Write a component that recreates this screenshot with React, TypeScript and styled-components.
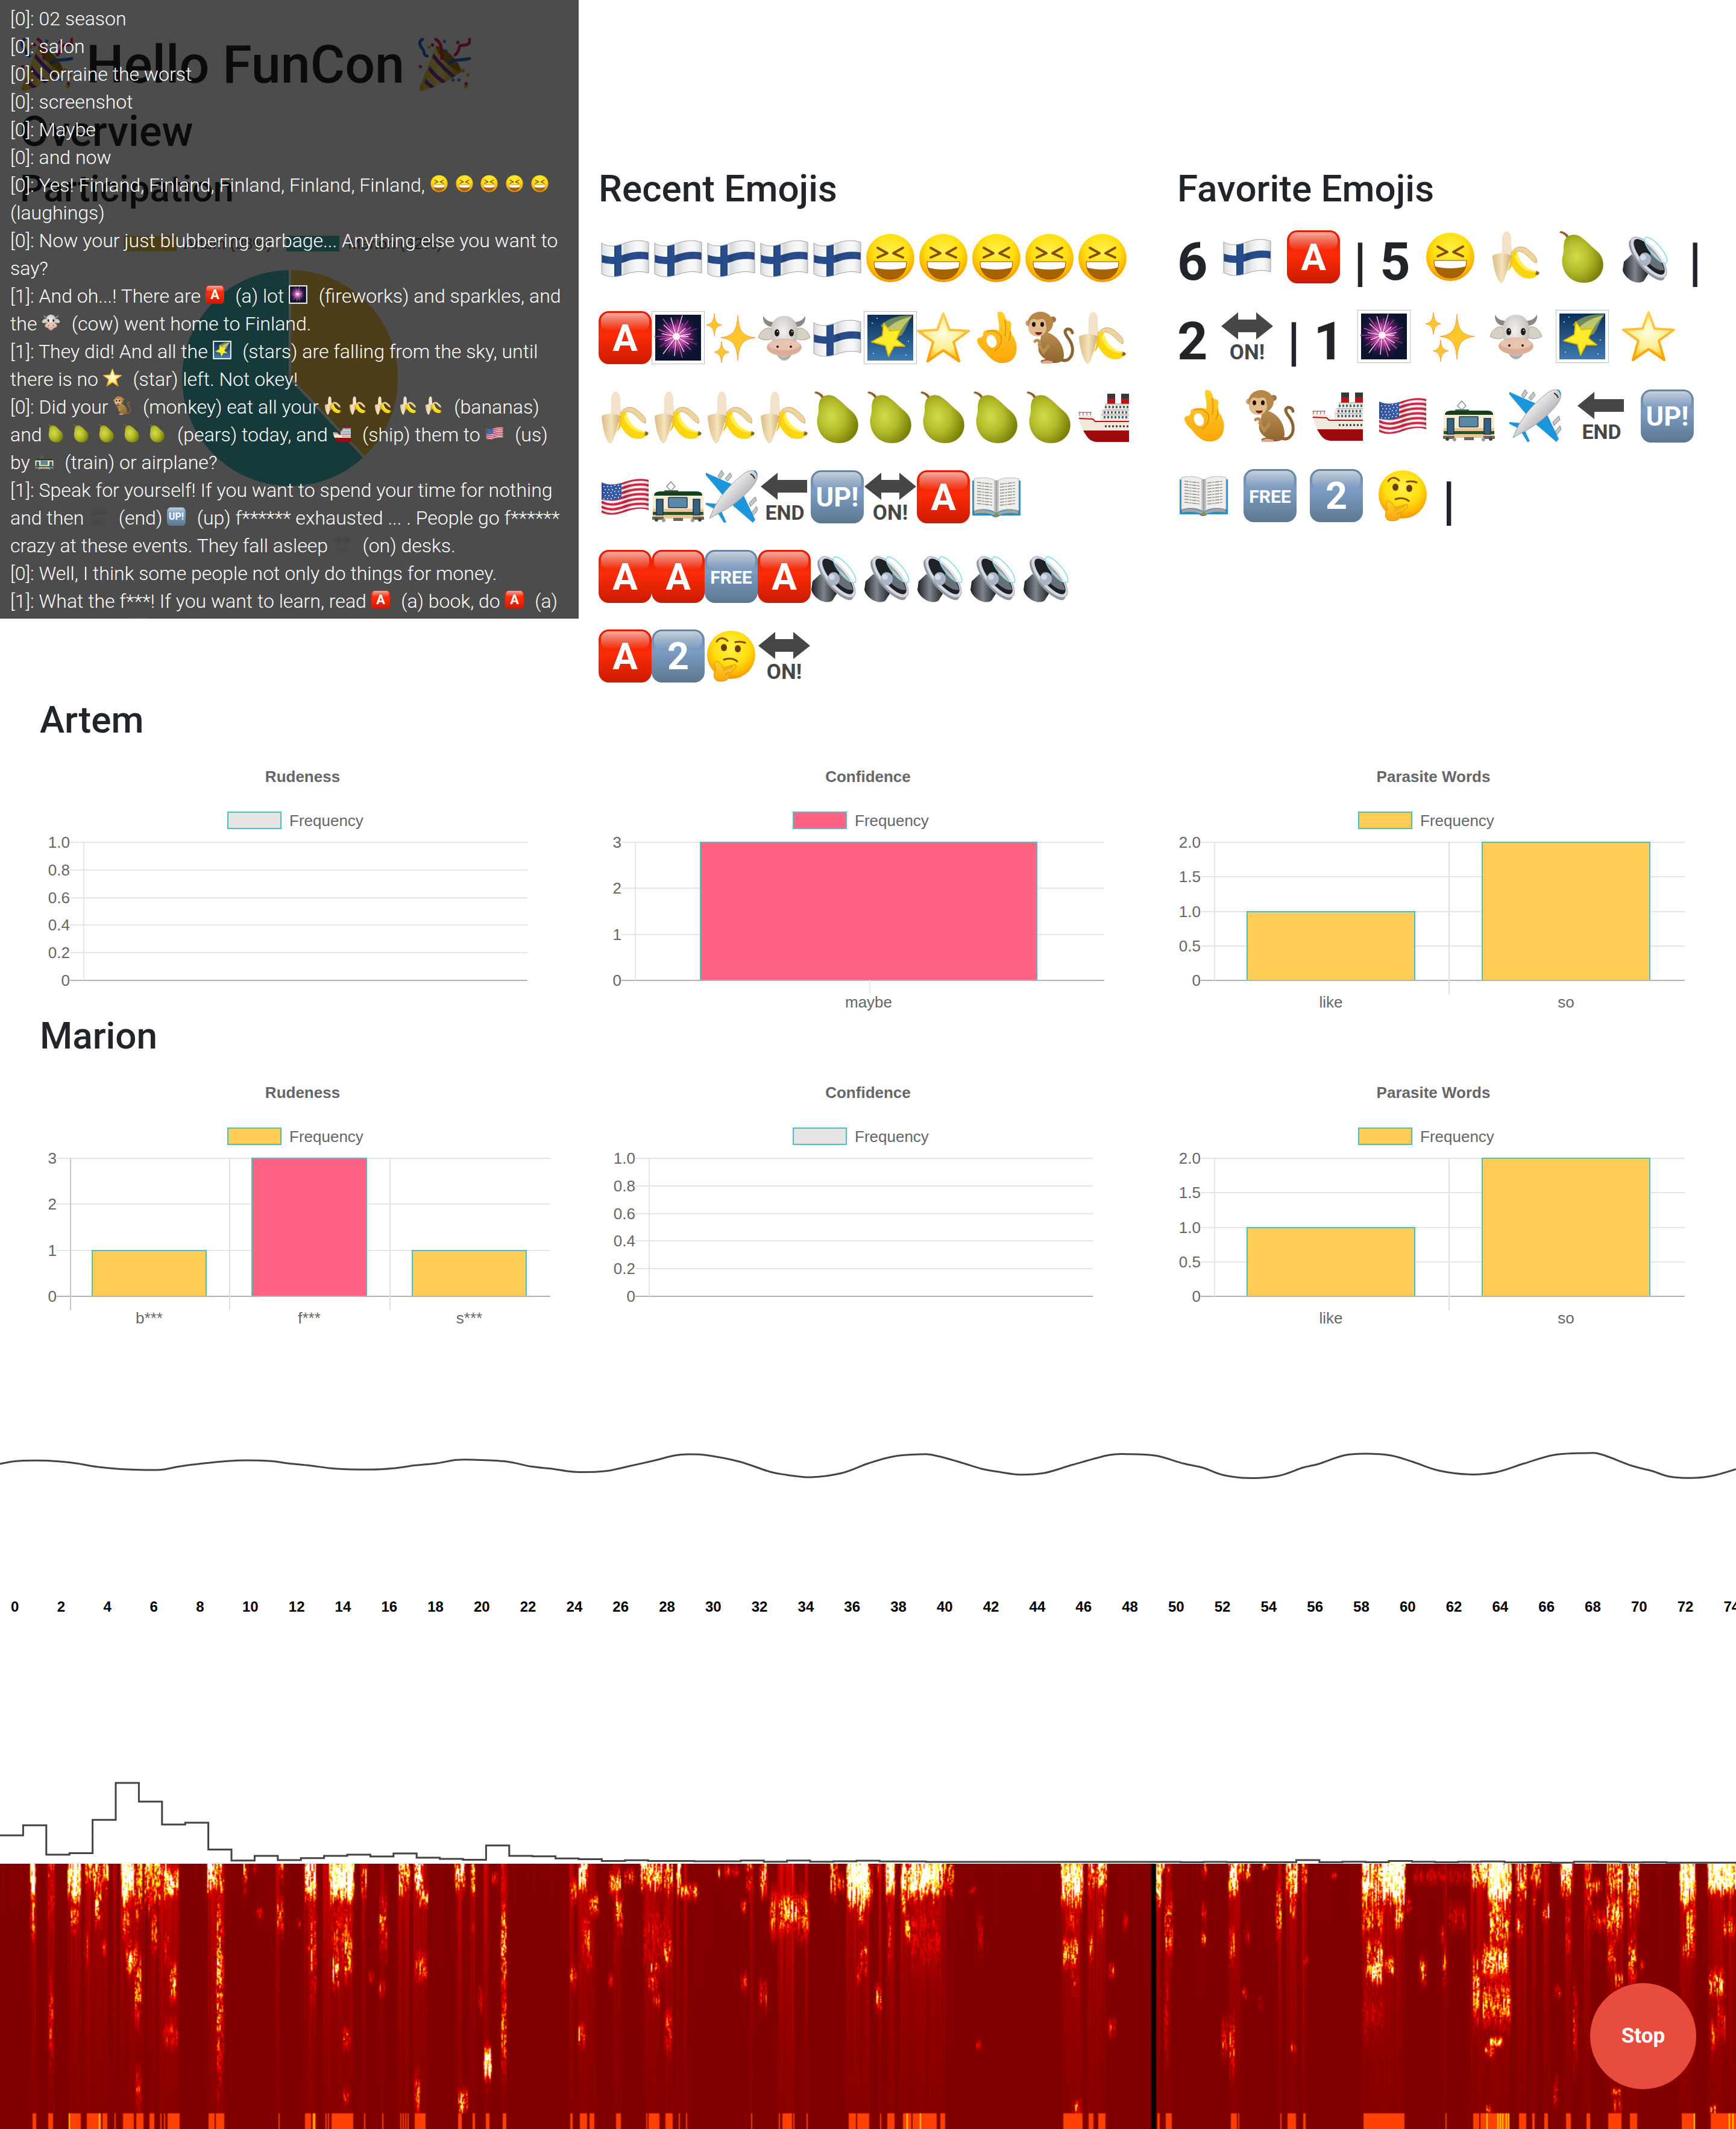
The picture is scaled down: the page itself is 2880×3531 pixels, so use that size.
import React, { useEffect, useRef } from "react";
import styled, { createGlobalStyle } from "styled-components";

const GlobalStyle = createGlobalStyle`
  *, *::before, *::after { box-sizing: border-box; }
  body {
    margin: 0;
    background: #fff;
    color: #212529;
    font-family: Roboto, "Liberation Sans", sans-serif;
  }
  h1, h2, h3, p { margin: 0; }
`;

/* ---------- layout ---------- */

const Page = styled.div`
  position: relative;
  overflow: hidden;
`;

const Header = styled.header`
  padding: 54px 33px 0;
`;

const PageTitle = styled.h1`
  display: flex;
  align-items: center;
  gap: 22px;
  font-size: 88px;
  line-height: 106px;
  font-weight: 500;
  margin-bottom: 16px;
`;

const SectionTitle = styled.h2`
  font-size: 70px;
  line-height: 84px;
  font-weight: 500;
  margin-bottom: 16px;
`;

const BlockTitle = styled.h3<{ $inset?: boolean }>`
  font-size: 62px;
  line-height: 74px;
  font-weight: 500;
  padding-left: ${(p) => (p.$inset ? 33 : 0)}px;
  margin-bottom: 18px;
`;

const Columns = styled.div`
  display: grid;
  grid-template-columns: repeat(3, minmax(0, 1fr));
`;

const Column = styled.section`
  padding: 0 33px;
`;

const People = styled.main`
  padding: 3px 33px 0;
`;

const Person = styled.section`
  & + & { margin-top: -4px; }
`;

/* ---------- emojis ---------- */

const Glyph = styled.svg<{ $size: number; $drop: number; $gap: number }>`
  width: ${(p) => p.$size}px;
  height: ${(p) => p.$size}px;
  margin: 0 ${(p) => p.$gap}px 0 0;
  vertical-align: -${(p) => p.$drop}px;
  flex: none;
`;

const EmojiRow = styled.div`
  display: flex;
  align-items: center;
  height: 132px;
  &:first-of-type { margin-top: -6px; }
`;

const Favorites = styled.p`
  font-size: 88px;
  line-height: 132px;
  font-weight: 700;
  svg { vertical-align: -6px; }
`;

const HiddenDefs = styled.svg`
  position: absolute;
  width: 0;
  height: 0;
`;

function Emoji({ name, size = 88, drop = 0, gap = 0 }: { name: string; size?: number; drop?: number; gap?: number }) {
  return (
    <Glyph $size={size} $drop={drop} $gap={gap} viewBox="0 0 88 88" role="img" aria-label={name}>
      <use href={`#e-${name}`} />
    </Glyph>
  );
}

const FLAG = "M5 19 C17 27 30 24 44 19 S72 14 83 18 V69 C72 65 58 66 44 71 S17 77 5 70 Z";
const US_FLAG = "M5 20 C17 26 30 24 44 19 S72 13 83 16 V66 C72 62 58 64 44 69 S17 76 5 70 Z";

const burst = Array.from({ length: 34 }, (_, i) => {
  const a = (i / 34) * Math.PI * 2;
  const r = 20 + ((i * 7) % 5) * 4;
  return { x: 41 + Math.cos(a) * r, y: 42 + Math.sin(a) * r, c: i % 3 === 0 ? "#ffe3f4" : i % 3 === 1 ? "#e35bb5" : "#a33a9c" };
});

function Tile({ id, fill, label, size, y }: { id: string; fill: string; label: string; size: number; y: number }) {
  return (
    <symbol id={id} viewBox="0 0 88 88">
      <rect width="88" height="88" rx="17" fill={fill} />
      <rect x="4" y="3" width="80" height="30" rx="13" fill="url(#g-gloss)" />
      <text x="44" y={y} fontSize={size} fontWeight="700" fontFamily="Roboto, sans-serif" textAnchor="middle" fill="#fff">
        {label}
      </text>
    </symbol>
  );
}

function EmojiDefs() {
  return (
    <HiddenDefs aria-hidden="true">
      <defs>
        <radialGradient id="g-face" cx=".5" cy=".35" r=".65">
          <stop offset="0" stopColor="#fff04a" />
          <stop offset=".55" stopColor="#ffdf10" />
          <stop offset=".85" stopColor="#ffb300" />
          <stop offset="1" stopColor="#f29400" />
        </radialGradient>
        <linearGradient id="g-red" x2="0" y2="1">
          <stop offset="0" stopColor="#e01c00" />
          <stop offset=".45" stopColor="#fb2c06" />
          <stop offset="1" stopColor="#cb1a00" />
        </linearGradient>
        <linearGradient id="g-blue" x2="0" y2="1">
          <stop offset="0" stopColor="#66829f" />
          <stop offset=".4" stopColor="#7b9cc4" />
          <stop offset="1" stopColor="#5d7790" />
        </linearGradient>
        <linearGradient id="g-gloss" x2="0" y2="1">
          <stop offset="0" stopColor="#fff" stopOpacity=".62" />
          <stop offset="1" stopColor="#fff" stopOpacity="0" />
        </linearGradient>
        <linearGradient id="g-cloth">
          <stop offset="0" stopColor="#000" stopOpacity=".12" />
          <stop offset=".3" stopColor="#fff" stopOpacity="0" />
          <stop offset=".5" stopColor="#000" stopOpacity=".13" />
          <stop offset=".8" stopColor="#fff" stopOpacity="0" />
          <stop offset="1" stopColor="#000" stopOpacity=".16" />
        </linearGradient>
        <radialGradient id="g-burst">
          <stop offset="0" stopColor="#fff" />
          <stop offset=".18" stopColor="#ff8fd0" />
          <stop offset=".5" stopColor="#8a2785" stopOpacity=".8" />
          <stop offset="1" stopColor="#0d1330" stopOpacity="0" />
        </radialGradient>
        <linearGradient id="g-night" x2="0" y2="1">
          <stop offset="0" stopColor="#0c2f5a" />
          <stop offset="1" stopColor="#3e7ab0" />
        </linearGradient>
        <radialGradient id="g-star" cx=".5" cy=".4" r=".6">
          <stop offset="0" stopColor="#fffde0" />
          <stop offset=".6" stopColor="#ffee90" />
          <stop offset="1" stopColor="#ffbe14" />
        </radialGradient>
        <linearGradient id="g-starEdge" x2="0" y2="1">
          <stop offset="0" stopColor="#ffd257" />
          <stop offset="1" stopColor="#ff9e00" />
        </linearGradient>
        <linearGradient id="g-hand" x2="0" y2="1">
          <stop offset="0" stopColor="#ffd02b" />
          <stop offset="1" stopColor="#fba60a" />
        </linearGradient>
        <radialGradient id="g-pear" cx=".35" cy=".45" r=".65">
          <stop offset="0" stopColor="#d3dc4c" />
          <stop offset=".5" stopColor="#b3bb2b" />
          <stop offset="1" stopColor="#7b8007" />
        </radialGradient>
        <linearGradient id="g-peel">
          <stop offset="0" stopColor="#d9bd88" />
          <stop offset=".5" stopColor="#f4e3bd" />
          <stop offset="1" stopColor="#ceaa6d" />
        </linearGradient>
        <linearGradient id="g-fur" x2="0" y2="1">
          <stop offset="0" stopColor="#ba8d50" />
          <stop offset="1" stopColor="#8d6430" />
        </linearGradient>
        <linearGradient id="g-metal">
          <stop offset="0" stopColor="#1c1f22" />
          <stop offset=".45" stopColor="#7d858c" />
          <stop offset="1" stopColor="#16181a" />
        </linearGradient>
        <linearGradient id="g-plane" x1="0" y1="0" x2="1" y2="1">
          <stop offset=".3" stopColor="#f7f7f7" />
          <stop offset=".75" stopColor="#a2a4a8" />
        </linearGradient>
        <linearGradient id="g-gold">
          <stop offset="0" stopColor="#e6be20" />
          <stop offset=".5" stopColor="#fff07d" />
          <stop offset="1" stopColor="#c89a08" />
        </linearGradient>
        <radialGradient id="g-cow" cx=".45" cy=".35" r=".65">
          <stop offset="0" stopColor="#f4f1ed" />
          <stop offset="1" stopColor="#b9b4ae" />
        </radialGradient>
        <clipPath id="c-flag"><path d={FLAG} /></clipPath>
        <clipPath id="c-us"><path d={US_FLAG} /></clipPath>
        <clipPath id="c-cone"><path d="M30 13 C50 18 70 40 72 56 C52 72 28 82 7 88 Z" /></clipPath>
      </defs>

      <symbol id="e-finland" viewBox="0 0 88 88">
        <path d={FLAG} fill="#f6f7f9" />
        <g clipPath="url(#c-flag)" fill="none" stroke="#24498a">
          <path d="M32 10V80" strokeWidth="12" />
          <path d="M0 43 C17 50 30 49 44 44 S72 38 88 42" strokeWidth="12" />
        </g>
        <path d={FLAG} fill="url(#g-cloth)" stroke="#9aa0a6" strokeWidth="1" />
      </symbol>

      <symbol id="e-us" viewBox="0 0 88 88">
        <path d={US_FLAG} fill="#f6f4f4" />
        <g clipPath="url(#c-us)">
          <g fill="none" stroke="#cf2440" strokeWidth="4">
            {[0, 1, 2, 3, 4, 5, 6].map((i) => (
              <path key={i} d={`M0 ${18 + i * 8} C17 ${28 + i * 8} 30 ${25 + i * 8} 44 ${20 + i * 8} S72 ${14 + i * 8} 88 ${18 + i * 8}`} />
            ))}
          </g>
          <path d="M0 16 C17 26 28 23 38 19 V46 C25 51 12 51 0 47 Z" fill="#3158a6" />
          <g fill="#fff">
            {[0, 1, 2, 3, 4].map((r) =>
              [0, 1, 2, 3, 4].map((c) => <circle key={`${r}${c}`} cx={9 + c * 6 + (r % 2) * 2} cy={27 + r * 5 - (c > 2 ? 2 : 0)} r="1" />),
            )}
          </g>
        </g>
        <path d={US_FLAG} fill="url(#g-cloth)" />
      </symbol>

      <symbol id="e-laugh" viewBox="0 0 88 88">
        <circle cx="44" cy="44" r="40" fill="url(#g-face)" />
        <path d="M23 27 L39 36 L23 43 M65 27 L49 36 L65 43" fill="none" stroke="#8a4b00" strokeWidth="4" strokeLinecap="round" strokeLinejoin="round" />
        <path d="M17 50 H71 C71 68 60 79 44 79 S17 68 17 50Z" fill="#a66300" />
        <path d="M17 50 H71 C71 54 71 57 69 60 C52 64 36 64 19 60 C17 57 17 54 17 50Z" fill="#fff" />
        <path d="M17 50 H71 C71 68 60 79 44 79 S17 68 17 50Z" fill="none" stroke="#8a4b00" strokeWidth="1" />
      </symbol>

      <symbol id="e-thinking" viewBox="0 0 88 88">
        <circle cx="44" cy="42" r="40" fill="url(#g-face)" />
        <ellipse cx="32" cy="30" rx="5" ry="6" fill="#6d3a00" />
        <ellipse cx="55" cy="32" rx="5" ry="6" fill="#6d3a00" />
        <path d="M20 20 C24 13 32 13 38 19 M51 21 C56 20 62 20 67 22" fill="none" stroke="#8a4b00" strokeWidth="3" strokeLinecap="round" />
        <path d="M32 50 C40 47 49 48 54 53" fill="none" stroke="#8a4b00" strokeWidth="3" strokeLinecap="round" />
        <path d="M18 53 C14 56 18 62 19 66 C13 74 14 86 26 86 C38 86 42 80 41 74 L51 64 C55 60 51 57 47 59 L31 64 C29 60 25 52 18 53Z" fill="url(#g-hand)" stroke="#e28a00" strokeWidth="1" />
        <path d="M30 68 L47 61 M34 75 L41 71" fill="none" stroke="#d98300" strokeWidth="1" />
      </symbol>

      <Tile id="e-a" fill="url(#g-red)" label="A" size={62} y={66} />
      <Tile id="e-up" fill="url(#g-blue)" label="UP!" size={45} y={60} />
      <Tile id="e-free" fill="url(#g-blue)" label="FREE" size={30} y={56} />
      <Tile id="e-two" fill="url(#g-blue)" label="2" size={63} y={66} />

      <symbol id="e-end" viewBox="0 0 88 88">
        <path d="M5 27 L33 4 V16 H82 V37 H33 V49 Z" fill="#464646" />
        <text x="45" y="82" fontSize="34" fontWeight="700" fontFamily="Roboto, sans-serif" textAnchor="middle" fill="#464646">END</text>
      </symbol>

      <symbol id="e-on" viewBox="0 0 88 88">
        <path d="M1 27 L29 4 V16 H59 V4 L87 27 L59 49 V37 H29 V49 Z" fill="#464646" />
        <text x="44" y="82" fontSize="35" fontWeight="700" fontFamily="Roboto, sans-serif" textAnchor="middle" fill="#464646">ON!</text>
      </symbol>

      <symbol id="e-fireworks" viewBox="0 0 88 88">
        <rect x=".5" y=".5" width="87" height="87" fill="#fff" stroke="#b8c4c8" />
        <rect x="6" y="6" width="76" height="76" fill="#0d1430" />
        <circle cx="42" cy="42" r="38" fill="url(#g-burst)" />
        {burst.map((b, i) => (
          <path key={i} d={`M41 42L${b.x.toFixed(1)} ${b.y.toFixed(1)}`} stroke={b.c} strokeWidth="1.3" strokeLinecap="round" />
        ))}
        <circle cx="41" cy="42" r="6" fill="#fff" opacity=".9" />
      </symbol>

      <symbol id="e-stars" viewBox="0 0 88 88">
        <rect x=".5" y=".5" width="87" height="87" fill="#fff" stroke="#b8c4c8" />
        <rect x="6" y="6" width="76" height="76" fill="url(#g-night)" />
        <path d="M28 24 C42 10 60 7 81 7 C74 16 70 30 63 40 L46 46Z" fill="#b6ca53" opacity=".55" />
        <path d="M38 30 C50 18 64 12 80 9 C70 18 64 28 58 38Z" fill="#f5ef76" opacity=".6" />
        <path d="M33 20 L43 33 L61 31 L54 47 L68 58 L50 58 L41 75 L36 57 L13 51 L31 41 Z" fill="#ffec2b" stroke="#e2be00" strokeWidth="2" strokeLinejoin="round" />
        <g fill="#cfe2f2">
          <circle cx="14" cy="20" r="1" /><circle cx="22" cy="12" r="1" /><circle cx="74" cy="50" r="1" /><circle cx="70" cy="73" r="1" /><circle cx="16" cy="70" r="1" />
        </g>
      </symbol>

      <symbol id="e-star" viewBox="0 0 88 88">
        <path d="M44 4 L54 31 L86 33 L61 51 L70 83 L44 65 L18 83 L27 51 L2 33 L34 31 Z" fill="url(#g-star)" stroke="url(#g-starEdge)" strokeWidth="4" strokeLinejoin="round" />
      </symbol>

      <symbol id="e-sparkles" viewBox="0 0 88 88">
        <g fill="#ffc52b" stroke="#f5a13d" strokeWidth="1" strokeLinejoin="round">
          <path d="M55 7 C57 33 62 41 84 44 C62 47 57 56 55 82 C53 56 48 47 27 44 C48 41 53 33 55 7Z" />
          <path d="M16 4 C17 17 20 21 28 23 C20 25 17 29 16 41 C15 29 12 25 3 23 C12 21 15 17 16 4Z" />
          <path d="M28 50 C29 62 32 66 41 68 C32 70 29 74 28 86 C27 74 24 70 16 68 C24 66 27 62 28 50Z" />
        </g>
      </symbol>

      <symbol id="e-cow" viewBox="0 0 88 88">
        <path d="M9 8 C8 22 18 28 30 26 L32 17 C22 20 14 16 9 8Z M79 8 C80 22 70 28 58 26 L56 17 C66 20 74 16 79 8Z" fill="#8c8782" />
        <path d="M1 44 C4 34 11 27 21 28 L26 44 C18 50 8 48 1 44Z M87 44 C84 34 77 27 67 28 L62 44 C70 50 80 48 87 44Z" fill="#d6d1c4" stroke="#a59d86" strokeWidth="1" />
        <path d="M44 8 C58 8 66 18 66 34 C66 52 58 82 44 82 S22 52 22 34 C22 18 30 8 44 8Z" fill="url(#g-cow)" />
        <ellipse cx="44" cy="60" rx="29" ry="14" fill="#dcae98" />
        <ellipse cx="44" cy="56" rx="26" ry="9" fill="#e8c3b0" />
        <ellipse cx="32" cy="36" rx="4" ry="6" fill="#1d1a18" />
        <ellipse cx="56" cy="36" rx="4" ry="6" fill="#1d1a18" />
        <circle cx="33" cy="34" r="1" fill="#fff" /><circle cx="57" cy="34" r="1" fill="#fff" />
        <circle cx="33" cy="59" r="2" fill="#2a1712" /><circle cx="55" cy="59" r="2" fill="#2a1712" />
        <path d="M35 75 C40 80 48 80 53 75" fill="none" stroke="#9b948c" strokeWidth="1" />
      </symbol>

      <symbol id="e-ok" viewBox="0 0 88 88">
        <path d="M47 4 C52 -1 58 3 58 10 L64 32 C72 26 69 12 60 17 L68 36 L77 54 C80 72 72 86 54 86 C42 86 37 80 30 74 L17 58 C10 52 11 44 17 44 C24 42 22 36 30 32 C38 29 48 31 48 33 C50 24 46 12 47 4Z" fill="url(#g-hand)" />
        <path d="M46 2 C52 -2 58 4 60 14 C66 18 68 26 69 38 C76 46 78 56 76 66 C72 82 60 88 50 86 C40 84 36 78 30 72 C22 64 12 58 13 48 C15 42 22 46 26 50 C22 42 20 38 24 33 C30 30 44 30 50 36 C54 26 44 12 46 2Z" fill="url(#g-hand)" />
        <ellipse cx="36" cy="50" rx="8" ry="11" fill="#fff" transform="rotate(-20 36 50)" />
        <path d="M28 34 C38 30 46 34 52 42 C54 52 48 62 40 66 M58 14 C60 24 60 34 58 42 M67 34 C68 42 66 46 64 50" fill="none" stroke="#e08c00" strokeWidth="1.5" />
      </symbol>

      <symbol id="e-monkey" viewBox="0 0 88 88">
        <path d="M62 80 C74 86 84 76 82 60 C80 46 70 42 70 34 C71 28 80 28 82 36" fill="none" stroke="#8d6430" strokeWidth="5" strokeLinecap="round" />
        <path d="M34 34 C52 36 68 52 68 74 C68 84 60 86 52 86 H34 C26 84 30 80 38 80 C28 74 22 64 28 54 C30 46 28 42 34 34Z" fill="url(#g-fur)" />
        <path d="M20 50 C24 46 30 50 27 56 L34 68 L42 58" fill="none" stroke="#b98c52" strokeWidth="5" strokeLinecap="round" />
        <path d="M30 85 C36 80 44 82 50 84 L48 87 H30Z" fill="#dfa98c" />
        <circle cx="9" cy="20" r="5" fill="#d79f86" /><circle cx="50" cy="14" r="5" fill="#a27542" />
        <ellipse cx="29" cy="20" rx="21" ry="19" fill="#b58849" />
        <ellipse cx="24" cy="28" rx="15" ry="14" fill="#e1bc8a" />
        <circle cx="18" cy="20" r="7" fill="#e1bc8a" /><circle cx="31" cy="20" r="7" fill="#e1bc8a" />
        <ellipse cx="18" cy="22" rx="3" ry="4" fill="#1c120a" /><ellipse cx="32" cy="22" rx="3" ry="4" fill="#1c120a" />
        <path d="M20 35 H32 C30 41 22 41 20 35Z" fill="#7d1f1c" />
      </symbol>

      <symbol id="e-banana" viewBox="0 0 88 88">
        <path d="M20 40 C22 26 18 8 26 2 C34 -1 37 10 36 20 L38 44 Z" fill="#f3e2ca" />
        <path d="M36 38 C42 26 56 24 66 34 C74 40 80 46 78 54 C68 52 62 36 48 34 C44 38 42 44 38 48Z" fill="#ecd49a" stroke="#cba765" strokeWidth="1" />
        <path d="M32 44 L44 32 C48 52 58 66 80 68 C84 72 76 80 66 80 C48 80 40 64 32 50Z" fill="#fbd510" />
        <path d="M46 36 C50 54 62 66 80 68 C70 72 50 66 42 44Z" fill="#fff04c" />
        <path d="M78 67 L83 70 L81 74 L76 74Z" fill="#8a6a22" />
        <path d="M5 42 C14 36 28 38 37 42 C32 52 32 64 26 76 C24 84 22 88 18 87 C10 78 6 58 5 42Z" fill="url(#g-peel)" />
        <path d="M37 42 C34 54 32 64 30 68 C38 62 40 52 38 42Z" fill="#f0c81c" />
      </symbol>

      <symbol id="e-pear" viewBox="0 0 88 88">
        <path d="M19 14 C16 8 12 5 6 4 L8 1 C17 3 22 8 23 14Z" fill="#94602a" />
        <path d="M14 20 C16 8 30 4 40 10 C52 18 58 26 68 34 C82 46 82 66 70 78 C58 90 36 90 22 78 C12 68 8 54 12 40 C14 32 12 28 14 20Z" fill="url(#g-pear)" />
      </symbol>

      <symbol id="e-ship" viewBox="0 0 88 88">
        <path d="M52 6 H65 V22 H52Z M75 6 H88 V22 H75Z" fill="#b5151a" />
        <path d="M52 5 H65 V13 H52Z M75 5 H88 V13 H75Z" fill="#34373b" />
        <path d="M48 22 H88 V50 H40 L42 32 H48Z" fill="#eee9dd" />
        <path d="M48 22 H88 M44 32 H88 M42 40 H88" stroke="#9a968b" strokeWidth="1" />
        <path d="M48 27 H88 M46 36 H88 M46 44 H88" stroke="#2f6aa5" strokeWidth="4" strokeDasharray="3 3" />
        <path d="M4 40 L26 42 L32 50 H88 V66 H12 C8 58 5 50 4 40Z" fill="#efe9dc" />
        <path d="M5 46 L28 47 L32 51 H88" fill="none" stroke="#b5151a" strokeWidth="2" />
        <path d="M48 59 H88" stroke="#333" strokeWidth="3" strokeDasharray="3 3" />
        <path d="M12 66 H88 V85 H34 C22 84 18 76 12 66Z" fill="#9d0a0c" />
        <path d="M4 36 H26 M6 36 V41 M12 36 V41 M18 36 V41 M24 36 V41" stroke="#8b3b35" strokeWidth="1" />
      </symbol>

      <symbol id="e-train" viewBox="0 0 88 88">
        <path d="M32 19 L39 27 L32 34 L25 27Z" fill="none" stroke="#8a8f93" strokeWidth="1.5" />
        <path d="M21 34 H44" stroke="#55605a" strokeWidth="2" />
        <path d="M4 42 C4 36 10 35 16 35 H72 C80 35 84 36 84 42Z" fill="#12401c" />
        <rect x="2" y="42" width="84" height="38" rx="2" fill="#e9c896" />
        <rect x="2" y="42" width="84" height="22" fill="#f6ecd4" />
        <rect x="2" y="69" width="84" height="5" fill="#1e5a28" />
        <rect x="28" y="45" width="31" height="17" rx="1" fill="#5b88a6" stroke="#2a3a44" strokeWidth="1.5" />
        <rect x="8" y="48" width="11" height="26" fill="#35607f" stroke="#1c3344" strokeWidth="1.5" />
        <rect x="69" y="48" width="11" height="26" fill="#35607f" stroke="#1c3344" strokeWidth="1.5" />
        <path d="M1 77 H20 V82 H1Z M68 77 H87 V82 H68Z M36 79 H52 V84 H36Z" fill="#6b655c" />
        <circle cx="8" cy="82" r="3" fill="#444" /><circle cx="20" cy="83" r="3" fill="#999" /><circle cx="68" cy="83" r="3" fill="#999" /><circle cx="80" cy="82" r="3" fill="#444" />
      </symbol>

      <symbol id="e-airplane" viewBox="0 0 88 88">
        <g fill="#c2c5ca" stroke="#7f8388" strokeWidth="1">
          <path d="M22 10 L28 0 L32 6 L26 14Z M34 14 L42 4 L45 10 L38 18Z M74 54 L84 44 L86 50 L76 60Z M78 70 L86 60 L88 66 L80 76Z" />
        </g>
        <path d="M2 4 L52 26 L34 46 L2 8Z" fill="#1b95dc" />
        <path d="M62 36 L84 82 L80 87 L44 56Z" fill="#1b95dc" />
        <path d="M2 54 L24 56 L20 66 L2 57Z M26 64 L36 86 L32 87 L20 68Z" fill="#1b95dc" />
        <path d="M84 1 C90 6 88 16 80 26 C68 42 44 62 22 72 L8 80 L14 66 C24 44 44 22 62 8 C70 1 78 -1 84 1Z" fill="url(#g-plane)" stroke="#989ba0" strokeWidth="1" />
        <path d="M76 6 C80 8 82 10 83 14" fill="none" stroke="#333" strokeWidth="2" />
        <path d="M80 0 C86 0 88 4 87 10 C86 6 84 3 80 0Z" fill="#1b95dc" />
      </symbol>

      <symbol id="e-book" viewBox="0 0 88 88">
        <path d="M4 17 H84 V75 H50 C46 79 40 79 36 75 H4Z" fill="#2f8cc0" />
        <path d="M8 68 C20 64 34 66 44 72 C54 66 68 64 80 68 V72 C68 70 56 70 44 76 C32 70 20 70 8 72Z" fill="#a5a5a5" />
        <path d="M7 14 C20 11 36 12 43 18 V70 C34 64 20 63 7 67Z M81 14 C68 11 52 12 45 18 V70 C54 64 68 63 81 67Z" fill="#efeeec" stroke="#bab8b4" strokeWidth="1" />
        <path d="M40 16 L44 19 L48 16 V68 L44 71 L40 68Z" fill="#a9a7a3" opacity=".6" />
        <g stroke="#8d8b87" strokeWidth="1.4" strokeDasharray="7 1 4 1">
          {[0, 1, 2, 3, 4, 5, 6, 7].map((i) => (
            <path key={i} d={`M12 ${20 + i * 5} L38 ${23 + i * 5} M50 ${23 + i * 5} L76 ${20 + i * 5}`} />
          ))}
        </g>
        <circle cx="44" cy="74" r="3" fill="#a98a1c" />
      </symbol>

      <symbol id="e-speaker" viewBox="0 0 88 88">
        <path d="M3 52 L16 40 L46 68 L36 84 C24 92 4 80 1 66Z" fill="url(#g-metal)" />
        <ellipse cx="41" cy="49" rx="15" ry="43" transform="rotate(-40 41 49)" fill="#8f979f" />
        <ellipse cx="44" cy="45" rx="17" ry="42" transform="rotate(-40 44 45)" fill="#d3d9e2" stroke="#99a1ab" strokeWidth="1" />
        <ellipse cx="45" cy="44" rx="13" ry="37" transform="rotate(-40 45 44)" fill="#1f2225" />
        <path d="M48 34 C58 42 67 53 70 66 C62 68 52 62 44 54Z" fill="#696f76" />
        <ellipse cx="38" cy="48" rx="10" ry="11" fill="#a9b4c4" />
        <circle cx="35" cy="45" r="5" fill="#dbe3ee" opacity=".8" />
        <ellipse cx="56" cy="33" rx="9" ry="27" transform="rotate(-40 56 33)" fill="#fff" fillOpacity=".6" stroke="#7bdce8" strokeWidth="1.5" />
      </symbol>

      <symbol id="e-party" viewBox="0 0 88 88">
        <path d="M30 13 C50 18 70 40 72 56 C52 72 28 82 7 88 C4 88 2 86 3 82 Z" fill="url(#g-gold)" />
        <g clipPath="url(#c-cone)" fill="none" stroke="#8438b4" strokeWidth="6">
          <path d="M24 28 C34 40 46 54 62 66 M16 46 C24 58 34 68 48 76 M8 66 C14 74 20 80 28 84" />
        </g>
        <path d="M30 13 C50 18 70 40 72 56 C56 52 34 32 30 13Z" fill="#a98010" />
        <g fill="none" strokeWidth="5" strokeLinecap="round">
          <path d="M8 2 C0 6 4 14 8 18 C12 22 8 28 16 30" stroke="#2f6fd8" />
          <path d="M30 2 C40 8 40 20 40 34" stroke="#e6285a" />
          <path d="M52 42 C58 34 72 38 86 34" stroke="#2f6fd8" />
          <path d="M86 2 C88 10 82 12 74 12 C66 12 72 20 62 28" stroke="#e6285a" />
        </g>
        <g fill="#f2b50f"><path d="M18 12l4 3-3 4-4-3zM74 50l5 3-3 5-5-3zM82 58l5 2-3 5-4-3zM78 76l6 2-3 6-5-3z" /></g>
        <g fill="#2f9be0"><path d="M44 2l4 3-3 4-4-3zM46 18l4 3-3 4-4-3zM58 66l4 3-3 4-4-3zM68 66l4 3-3 4-4-3z" /></g>
        <g fill="#e6287a"><path d="M24 8l4 3-3 4-4-3zM66 4l4 3-3 4-4-3zM4 44l4 3-3 4-4-3zM80 72l4 3-3 4-4-3z" /></g>
      </symbol>
    </HiddenDefs>
  );
}

/* ---------- transcript ---------- */

const Transcript = styled.aside`
  position: absolute;
  top: 0;
  left: 0;
  width: 33.3333%;
  height: 1026px;
  padding: 8px 17px;
  overflow: hidden;
  background: rgba(0, 0, 0, 0.7);
  color: #fff;
  font-size: 32px;
  line-height: 46px;
  font-weight: 300;
`;

const Line = styled.p`
  white-space: pre-wrap;
`;

const Indent = styled.span`
  display: inline-block;
  width: 199px;
`;

const transcript = [
  "[0]: 02 season",
  "[0]: salon",
  "[0]: Lorraine the worst",
  "[0]: screenshot",
  "[0]: Maybe",
  "[0]: and now",
  "[0]: Yes! Finland, Finland, Finland, Finland, Finland, {laugh} {laugh} {laugh} {laugh} {laugh}  (laughings)",
  "[0]: Now your just blubbering garbage... Anything else you want to say?",
  "[1]: And oh...! There are {a}  (a) lot {fireworks}  (fireworks) and sparkles, and the {cow}  (cow) went home to Finland.",
  "[1]: They did! And all the {stars}  (stars) are falling from the sky, until there is no {star}  (star) left. Not okey!",
  "[0]: Did your {monkey}  (monkey) eat all your {banana} {banana} {banana} {banana} {banana}  (bananas) and {pear} {pear} {pear} {pear} {pear}  (pears) today, and {ship}  (ship) them to {us}  (us) by {train}  (train) or airplane?",
  "[1]: Speak for yourself! If you want to spend your time for nothing and then {end}  (end) {up}  (up) f****** exhausted ... . People go f****** crazy at these events. They fall asleep {on}  (on) desks.",
  "[0]: Well, I think some people not only do things for money.",
  "[1]: What the f***! If you want to learn, read {a}  (a) book, do {a}  (a)",
];

function renderLine(text: string) {
  return text.split(/(\{\w+\})/).map((part, i) =>
    part.startsWith("{") ? <Emoji key={i} name={part.slice(1, -1)} size={31} drop={2} gap={3} /> : part,
  );
}

/* ---------- charts ---------- */

const Chart = styled.svg`
  display: block;
  width: 100%;
  height: auto;
  font-family: "Liberation Sans", Arial, sans-serif;
  font-size: 26px;
  fill: #666;
`;

const YELLOW = "#ffcd56";
const PINK = "#ff6384";
const TEAL = "#4bc0c0";
const TOP = 148;
const BASE = 377;

type ChartSpec = {
  title: string;
  legend: string;
  ticks: string[];
  left: number;
  right: number;
  bars: { label: string; share: number; color: string }[];
  strongAxis?: boolean;
};

function BarChart({ title, legend, ticks, left, right, bars, strongAxis }: ChartSpec) {
  const step = (right - left) / Math.max(bars.length, 1);
  return (
    <Chart viewBox="0 0 872 436" role="img" aria-label={title}>
      <text x="436" y="48" textAnchor="middle" fontWeight="700">{title}</text>
      <rect x="312" y="98" width="88" height="27" fill={legend} stroke={TEAL} strokeWidth="2" />
      <text x="414" y="121">Frequency</text>
      {ticks.map((t, i) => {
        const y = Math.round(BASE - ((BASE - TOP) * i) / (ticks.length - 1));
        return (
          <g key={t}>
            <path d={`M${left - 23} ${y}H${right}`} stroke={i === 0 ? "#b3b3b3" : "#e5e5e5"} strokeWidth="2" />
            <text x={left - 23} y={y + 9} textAnchor="end">{t}</text>
          </g>
        );
      })}
      <path d={`M${left} ${TOP}V${strongAxis ? 400 : BASE}`} stroke={strongAxis ? "#c8c8c8" : "#e5e5e5"} strokeWidth="2" />
      {bars.length === 1 && <path d={`M${left + step / 2} ${TOP}V400`} stroke="#e5e5e5" strokeWidth="2" />}
      {bars.slice(1).map((b, i) => (
        <path key={b.label} d={`M${Math.round(left + step * (i + 1)) - 1} ${TOP}V400`} stroke="#e0e0e0" strokeWidth="2" />
      ))}
      {bars.map((b, i) => {
        const x0 = Math.round(left + step * (i + 0.14)) - 1;
        const x1 = Math.round(left + step * (i + 0.86)) - 3;
        const y = Math.round(BASE - (BASE - TOP) * b.share);
        return (
          <g key={b.label}>
            <path d={`M${x0} ${BASE - 1}V${y}H${x1}V${BASE - 1}`} fill={b.color} stroke={TEAL} strokeWidth="2" />
            <text x={(x0 + x1) / 2} y="422" textAnchor="middle">{b.label}</text>
          </g>
        );
      })}
    </Chart>
  );
}

const unit = ["0", "0.2", "0.4", "0.6", "0.8", "1.0"];
const parasite: ChartSpec = {
  title: "Parasite Words",
  legend: YELLOW,
  ticks: ["0", "0.5", "1.0", "1.5", "2.0"],
  left: 73,
  right: 853,
  bars: [
    { label: "like", share: 0.5, color: YELLOW },
    { label: "so", share: 1, color: YELLOW },
  ],
};

const people: { name: string; charts: ChartSpec[] }[] = [
  {
    name: "Artem",
    charts: [
      { title: "Rudeness", legend: "#e5e5e5", ticks: unit, left: 73, right: 809, bars: [] },
      { title: "Confidence", legend: PINK, ticks: ["0", "1", "2", "3"], left: 50, right: 828, bars: [{ label: "maybe", share: 1, color: PINK }] },
      parasite,
    ],
  },
  {
    name: "Marion",
    charts: [
      {
        title: "Rudeness",
        legend: YELLOW,
        ticks: ["0", "1", "2", "3"],
        left: 51,
        right: 847,
        strongAxis: true,
        bars: [
          { label: "b***", share: 1 / 3, color: YELLOW },
          { label: "f***", share: 1, color: PINK },
          { label: "s***", share: 1 / 3, color: YELLOW },
        ],
      },
      { title: "Confidence", legend: "#e5e5e5", ticks: unit, left: 73, right: 809, bars: [] },
      parasite,
    ],
  },
];

function ParticipationChart() {
  return (
    <Chart viewBox="0 0 894 450" role="img" aria-label="Participation">
      <rect x="172" y="23" width="88" height="26" fill={YELLOW} />
      <text x="272" y="45">Artem (38%)</text>
      <rect x="442" y="23" width="88" height="26" fill={TEAL} />
      <text x="544" y="45">Marion (62%)</text>
      <g stroke="#fff" strokeWidth="4">
        <path d="M448 259 V78 A181 181 0 0 1 572 391 Z" fill={YELLOW} />
        <path d="M448 259 L572 391 A181 181 0 1 1 448 78 Z" fill={TEAL} />
      </g>
    </Chart>
  );
}

/* ---------- audio panels ---------- */

const Audio = styled.section`
  position: relative;
  margin-top: 171px;
`;

const Plot = styled.svg`
  display: block;
  width: 100%;
  height: auto;
`;

const TickStrip = styled.div`
  display: flex;
  overflow: hidden;
  color: #000;
  font: 700 24px/28px "Liberation Sans", Arial, sans-serif;
`;

const Tick = styled.span`
  flex: 0 0 calc(100% / 37.5);
  padding-left: 18px;
`;

const Heat = styled.canvas`
  display: block;
  width: 100%;
  height: 440px;
`;

const StopButton = styled.button`
  position: absolute;
  right: 66px;
  bottom: 66px;
  width: 176px;
  height: 176px;
  border: 0;
  border-radius: 50%;
  background: #e74c3c;
  color: #fff;
  font: 700 35px/42px Roboto, sans-serif;
  cursor: pointer;
`;

const WAVE: [number, number][] = [
  [0, 144], [25, 131], [65, 127], [105, 131], [140, 142], [175, 158], [230, 171], [290, 173], [320, 158], [365, 142],
  [410, 130], [445, 126], [490, 130], [520, 141], [560, 152], [605, 167], [670, 172], [710, 166], [750, 151], [790, 140],
  [825, 124], [860, 124], [915, 132], [960, 157], [995, 167], [1040, 184], [1095, 179], [1135, 156], [1180, 128], [1220, 101],
  [1245, 96], [1275, 100], [1335, 132], [1390, 182], [1420, 198], [1465, 210], [1520, 190], [1568, 142], [1613, 107], [1663, 96],
  [1688, 101], [1733, 134], [1773, 168], [1808, 185], [1843, 197], [1888, 188], [1938, 148], [2003, 100], [2038, 95], [2088, 103],
  [2138, 142], [2173, 163], [2208, 198], [2253, 214], [2308, 204], [2353, 163], [2383, 143], [2428, 101], [2468, 93], [2513, 102],
  [2553, 134], [2598, 176], [2653, 196], [2703, 185], [2753, 142], [2808, 99], [2868, 90], [2893, 97], [2948, 153], [2983, 178],
  [3018, 208], [3063, 213], [3098, 200], [3136, 170],
];

/* Catmull-Rom curve through the sampled points. */
const wavePts = WAVE.map(([x, y]) => [x / 1.0889, y / 3]);
const wavePath = wavePts
  .map((p, i) => {
    if (i === 0) return `M${p[0]} ${p[1].toFixed(1)}`;
    const a = wavePts[i - 1];
    const before = wavePts[i - 2] ?? a;
    const after = wavePts[i + 1] ?? p;
    const c1 = [a[0] + (p[0] - before[0]) / 6, a[1] + (p[1] - before[1]) / 6];
    const c2 = [p[0] - (after[0] - a[0]) / 6, p[1] - (after[1] - a[1]) / 6];
    return `C${[...c1, ...c2, ...p].map((n) => n.toFixed(1)).join(" ")}`;
  })
  .join("");

const LEVELS = [
  118, 161, 36, 42, 184, 341, 262, 164, 172, 58, 11, 31, 13, 21, 31, 36, 28, 41, 23, 18, 14, 75, 31, 29, 20, 17, 9, 12, 9, 9,
  8, 8, 11, 6, 11, 6, 8, 10, 7, 7, 5, 5, 5, 5, 5, 5, 5, 5, 5, 5, 5, 4, 5, 4, 4, 4, 13, 4, 6, 4, 9, 6, 4, 6, 7, 3, 4, 2, 6, 5, 3, 4, 2, 2, 2,
];

const stepPath = LEVELS.map((v, i) => {
  const y = (170 - v / 2.566).toFixed(1);
  return `${i ? `V${y}` : `M0 ${y}`}H${(i + 1) * 38.4}`;
}).join("");

const W = 3136;

/* Energy patches: x start, x end, y start, y end, strength. */
const PATCHES: number[][] = [
  [58, 64, 0, 124, 4], [58, 64, 124, 324, 1.5], [88, 98, 0, 264, 0.8], [90, 96, 464, 844, 1.2], [125, 146, 0, 144, 3.5],
  [130, 142, 144, 284, 2], [156, 195, 0, 94, 2.2], [174, 182, 94, 264, 2.2], [155, 160, 264, 434, 1.2], [186, 192, 314, 394, 1],
  [222, 242, 0, 144, 4], [224, 232, 144, 324, 1.8], [230, 248, 324, 474, 1.9], [246, 256, 0, 224, 1.6], [246, 255, 384, 664, 1.5],
  [248, 254, 864, 1044, 0.9], [262, 300, 0, 164, 2], [275, 283, 164, 394, 1.2], [300, 323, 24, 134, 2.8], [297, 304, 264, 434, 1.1],
  [308, 318, 414, 574, 1.8], [298, 320, 644, 794, 1], [375, 390, 0, 104, 3.2], [390, 406, 0, 114, 2.2], [394, 402, 124, 864, 2.1],
  [441, 447, 0, 104, 1.5], [456, 462, 0, 34, 1], [465, 474, 184, 234, 0.9], [503, 511, 0, 64, 1], [503, 511, 144, 284, 1.7],
  [538, 543, 234, 274, 1.2], [551, 571, 0, 134, 3], [563, 570, 134, 564, 1.4], [554, 560, 334, 394, 1], [598, 637, 0, 134, 4.5],
  [600, 636, 134, 464, 1], [602, 612, 384, 524, 2.2], [622, 635, 284, 484, 2], [622, 632, 694, 784, 1.5], [622, 629, 944, 1034, 1],
  [655, 661, 0, 134, 1.8], [686, 700, 114, 384, 1.2], [688, 696, 204, 274, 1.8], [668, 676, 454, 504, 0.9], [687, 695, 494, 564, 1],
  [722, 740, 0, 124, 2.2], [750, 764, 0, 134, 3], [760, 774, 94, 184, 1.8], [750, 770, 364, 504, 1.3], [750, 757, 884, 1064, 1.3],
  [825, 838, 0, 104, 2.6], [831, 838, 954, 1064, 2.4], [838, 844, 964, 1044, 1.4], [853, 858, 0, 124, 2.2], [855, 859, 244, 304, 1],
  [890, 900, 34, 84, 0.9], [866, 872, 514, 644, 0.8], [877, 887, 794, 904, 4], [878, 884, 764, 944, 1.2], [908, 915, 0, 164, 1],
  [908, 915, 164, 514, 2.2], [908, 914, 514, 874, 1.3], [1031, 1042, 64, 164, 1.6], [1047, 1061, 0, 104, 3], [1066, 1080, 134, 214, 2.3],
  [1052, 1064, 184, 424, 1.3], [1031, 1040, 424, 524, 1.5], [1046, 1056, 684, 784, 1.8], [1060, 1070, 264, 464, 0.9], [1103, 1122, 24, 124, 2.4],
  [1113, 1123, 124, 294, 2.2], [1130, 1145, 24, 84, 1.5], [1100, 1106, 464, 524, 0.8], [1160, 1195, 0, 94, 2.6], [1165, 1210, 144, 464, 0.7],
  [1202, 1216, 0, 124, 2], [1225, 1229, 0, 114, 3.5], [1229, 1260, 84, 144, 2], [1202, 1212, 304, 444, 1.9], [1175, 1190, 414, 464, 1.6],
  [1172, 1186, 464, 544, 1.4], [1180, 1192, 544, 614, 0.9], [1203, 1212, 614, 794, 1.3], [1296, 1300, 14, 64, 1.5], [1310, 1335, 4, 54, 0.9],
  [1350, 1360, 0, 124, 1.5], [1376, 1386, 0, 124, 2], [1340, 1347, 154, 204, 1.2], [1340, 1347, 464, 544, 1.1], [1374, 1386, 494, 614, 1],
  [1393, 1460, 114, 304, 1.5], [1408, 1440, 134, 254, 2.6], [1453, 1461, 204, 324, 1.2], [1502, 1512, 0, 124, 2.2], [1512, 1524, 44, 114, 1.3],
  [1531, 1568, 0, 154, 4], [1551, 1560, 154, 264, 2.2], [1555, 1566, 324, 464, 1.6], [1550, 1556, 414, 514, 1],
  [1568, 1576, 4, 164, 1.5], [1584, 1592, 0, 64, 1], [1585, 1592, 514, 624, 2], [1601, 1616, 0, 124, 3.5], [1606, 1612, 124, 464, 1],
  [1630, 1648, 0, 164, 3], [1636, 1644, 204, 324, 2], [1648, 1696, 0, 124, 4], [1648, 1698, 124, 464, 0.7], [1698, 1723, 0, 124, 2],
  [1753, 1762, 94, 124, 0.9], [1768, 1774, 204, 364, 0.9], [1766, 1772, 744, 794, 0.7], [1920, 1955, 0, 154, 3.6], [1926, 1948, 154, 304, 1],
  [1922, 1946, 314, 444, 2.2], [1938, 1946, 434, 564, 1], [1940, 1954, 1004, 1064, 1.5], [1967, 1978, 0, 124, 2.4], [1968, 1973, 284, 414, 1.7],
  [1980, 2000, 0, 104, 2.8], [1985, 1992, 124, 304, 1.1], [2030, 2036, 204, 284, 0.8], [2005, 2015, 424, 484, 1.2], [2004, 2014, 654, 734, 0.9],
  [2090, 2098, 0, 164, 3.6], [2098, 2113, 0, 34, 2], [2106, 2116, 134, 384, 2.2], [2104, 2110, 384, 844, 0.7], [2173, 2179, 0, 54, 1.2],
  [2172, 2178, 284, 344, 1.6], [2173, 2180, 164, 264, 0.7], [2222, 2236, 0, 124, 3], [2236, 2258, 0, 64, 1.8], [2223, 2231, 254, 434, 1.6],
  [2251, 2256, 254, 334, 0.8], [2210, 2218, 674, 814, 1.4], [2223, 2231, 644, 884, 1.4], [2246, 2252, 524, 574, 1], [2274, 2280, 564, 614, 0.8],
  [2282, 2290, 0, 24, 2], [2308, 2316, 84, 314, 2], [2324, 2344, 0, 144, 2.6], [2331, 2340, 144, 244, 1.3], [2353, 2361, 0, 104, 1.3],
  [2354, 2361, 384, 424, 1.5], [2334, 2341, 754, 804, 1], [2406, 2416, 34, 64, 0.8], [2462, 2503, 0, 164, 2.6], [2498, 2538, 0, 144, 4.2],
  [2461, 2498, 164, 314, 1.5], [2468, 2498, 304, 504, 1.8], [2480, 2496, 404, 504, 2.8], [2520, 2534, 164, 284, 2.2], [2503, 2518, 394, 474, 1.9],
  [2541, 2550, 144, 204, 1.2], [2461, 2498, 504, 764, 0.5], [2553, 2663, 14, 84, 0.6], [2566, 2576, 404, 504, 2.2], [2608, 2614, 354, 504, 1.3],
  [2618, 2648, 164, 284, 0.7], [2604, 2610, 264, 344, 0.9], [2661, 2688, 0, 84, 2.6], [2690, 2728, 0, 164, 4], [2693, 2728, 164, 344, 2],
  [2680, 2724, 344, 484, 2.6], [2680, 2728, 484, 684, 1.8], [2662, 2672, 404, 654, 2.6], [2693, 2713, 734, 774, 2.6], [2684, 2698, 764, 824, 1.6],
  [2740, 2758, 0, 134, 2.4], [2740, 2750, 204, 304, 2], [2765, 2783, 0, 84, 1.8], [2788, 2798, 164, 244, 2.4], [2768, 2774, 124, 184, 1],
  [2686, 2692, 1024, 1064, 1.6], [2821, 2840, 0, 114, 2.8], [2830, 2838, 124, 424, 1], [2864, 2874, 0, 304, 1.1], [2811, 2817, 514, 564, 1.2],
  [2843, 2849, 524, 844, 1.2], [2808, 2814, 904, 1024, 1], [2868, 2893, 64, 124, 1.6], [2878, 2903, 184, 284, 1], [2903, 2931, 0, 124, 2.2],
  [2905, 2931, 124, 304, 1.9], [2906, 2918, 304, 454, 1.6], [2918, 2932, 454, 524, 1.6], [2944, 2960, 0, 184, 2.6], [2943, 2956, 304, 494, 1.7],
  [2965, 2969, 404, 464, 1.1], [2913, 2928, 954, 984, 1.5], [2918, 2930, 984, 1064, 0.9], [3037, 3061, 0, 144, 4], [3048, 3062, 144, 394, 2],
  [3042, 3052, 324, 404, 1.6], [3088, 3136, 0, 104, 3.6], [3116, 3133, 214, 314, 1.3], [3090, 3114, 444, 564, 2], [3092, 3102, 664, 804, 1.2],
  [3092, 3098, 1024, 1064, 1.8], [3104, 3116, 524, 774, 0.8],
];

/* Intervals in which the voice detector fired. */
const ACTIVE: number[][] = [
  [58, 64], [88, 96], [125, 146], [156, 182], [186, 195], [207, 210], [222, 242], [246, 260], [271, 280], [290, 292], [296, 298],
  [302, 323], [377, 388], [390, 405], [503, 505], [551, 561], [563, 570], [587, 589], [592, 594], [598, 637], [657, 659], [690, 692],
  [722, 724], [727, 729], [732, 733], [736, 738], [750, 769], [827, 833], [853, 858], [877, 883], [908, 915], [1031, 1035],
  [1047, 1061], [1065, 1074], [1112, 1121], [1167, 1169], [1171, 1190], [1202, 1214], [1225, 1228], [1239, 1241], [1357, 1359],
  [1407, 1410], [1413, 1431], [1433, 1435], [1457, 1459], [1533, 1545], [1548, 1569], [1589, 1591], [1603, 1615], [1631, 1646],
  [1649, 1693], [1699, 1708], [1921, 1955], [1967, 1976], [1983, 1996], [2091, 2096], [2106, 2116], [2223, 2233], [2237, 2240],
  [2312, 2314], [2326, 2342], [2355, 2360], [2464, 2537], [2611, 2613], [2661, 2671], [2674, 2726], [2743, 2755], [2769, 2774],
  [2790, 2797], [2829, 2837], [2865, 2872], [2906, 2931], [2944, 2956], [3037, 3061], [3090, 3136],
];

const PEAKS = [125, 178, 566, 1638, 1662, 2686, 2704, 2709, 2714, 2719, 2724, 3059, 3122, 3130];

function seeded(seed: number) {
  let s = seed;
  return () => {
    s = (s * 1664525 + 1013904223) >>> 0;
    return s / 4294967296;
  };
}

function paintHeat(canvas: HTMLCanvasElement) {
  const cols = 1440;
  const rows = 220;
  canvas.width = cols;
  canvas.height = rows;
  const ctx = canvas.getContext("2d");
  if (!ctx) return;
  const rand = seeded(42);
  const kx = cols / W;
  const ky = rows / 1128;
  const energy = new Float32Array(cols * rows);
  const noise = new Float32Array(cols * rows);
  for (let x = 0; x < cols; x++) {
    let n = rand();
    for (let y = 0; y < rows; y++) {
      n = n * 0.72 + rand() * 0.28;
      noise[y * cols + x] = Math.min(1, Math.max(0, (n - 0.5) * 3.4 + 0.45));
    }
  }
  /* Faint vertical hum over the whole strip. */
  for (let x = 0; x < cols; x++) {
    const hum = rand() * rand() * 0.12;
    for (let y = 0; y < rows; y++) energy[y * cols + x] = hum * Math.exp(-y / 120);
  }
  ACTIVE.forEach(([a, b]) => {
    for (let x = Math.floor(a * kx) - 1; x <= b * kx; x++) {
      if (x < 0 || x >= cols) continue;
      const tone = 0.15 + rand() * 0.6;
      for (let y = 0; y < rows; y++) energy[y * cols + x] += tone * Math.exp(-y / 100);
    }
  });
  PATCHES.forEach(([a, b, c, d, amp]) => {
    const x0 = Math.floor(a * kx);
    const x1 = Math.max(x0 + 2, Math.round(b * kx));
    const y0 = c * ky;
    const y1 = d * ky;
    const tail = (y1 - y0) * 0.45;
    const floor = amp >= 3.5 ? 0.5 : amp >= 2.5 ? 0.3 : 0.12;
    for (let x = x0 - 1; x <= x1; x++) {
      if (x < 0 || x >= cols) continue;
      const colGain = (x < x0 || x === x1 ? 0.35 : 1) * (0.6 + rand() * 0.7);
      const reach = 0.8 + rand() * 0.4;
      for (let y = Math.max(0, Math.floor(y0 - tail)); y < Math.min(rows, y1 + tail); y++) {
        const mid = (y - (y0 + y1) / 2) / ((y1 - y0) / 2);
        const fall = c === 0 ? Math.exp(-Math.pow(y / (y1 * reach), 4) * 0.9) : Math.exp(-mid * mid * 1.1);
        const i = y * cols + x;
        const v = amp * fall * colGain * (floor + 1.3 * noise[i]);
        energy[i] = Math.max(energy[i], v);
      }
    }
  });
  const img = ctx.createImageData(cols, rows);
  for (let i = 0; i < energy.length; i++) {
    const v = energy[i];
    img.data[i * 4] = 128 + Math.min(1, v) * 127;
    img.data[i * 4 + 1] = Math.min(1, Math.max(0, v - 1)) * 255;
    img.data[i * 4 + 2] = Math.min(1, Math.max(0, v - 2)) * 255;
    img.data[i * 4 + 3] = 255;
  }
  ctx.putImageData(img, 0, 0);
  ctx.fillStyle = "#800000";
  ctx.fillRect(0, 207, cols, 13);
  ctx.fillStyle = "#ff4000";
  ACTIVE.forEach(([a, b]) => ctx.fillRect(Math.round(a * kx), 207, Math.max(1, Math.round((b - a) * kx)), 13));
  ctx.fillStyle = "#ffd800";
  PEAKS.forEach((p) => ctx.fillRect(Math.round(p * kx), 207, 1, 13));
  ctx.fillStyle = "#000";
  ctx.fillRect(955, 0, 4, rows);
}

function Spectrogram() {
  const ref = useRef<HTMLCanvasElement>(null);
  useEffect(() => {
    if (ref.current) paintHeat(ref.current);
  }, []);
  return <Heat ref={ref} />;
}

/* ---------- page ---------- */

const recentRows = [
  "finland finland finland finland finland laugh laugh laugh laugh laugh",
  "a fireworks sparkles cow finland stars star ok monkey banana",
  "banana banana banana banana pear pear pear pear pear ship",
  "us train airplane end up on a book",
  "a a free a speaker speaker speaker speaker speaker",
  "a two thinking on",
];

const favorites = [
  { count: 6, names: "finland a" },
  { count: 5, names: "laugh banana pear speaker" },
  { count: 2, names: "on" },
  { count: 1, names: "fireworks sparkles cow stars star ok monkey ship us train airplane end up book free two thinking" },
];

export default function App() {
  return (
    <Page>
      <GlobalStyle />
      <EmojiDefs />
      <Header>
        <PageTitle>
          <Emoji name="party" />
          Hello FunCon
          <Emoji name="party" />
        </PageTitle>
        <SectionTitle>Overview</SectionTitle>
      </Header>

      <Columns>
        <Column>
          <BlockTitle>Participation</BlockTitle>
          <ParticipationChart />
        </Column>
        <Column>
          <BlockTitle>Recent Emojis</BlockTitle>
          {recentRows.map((row, i) => (
            <EmojiRow key={i}>
              {row.split(" ").map((name, j) => (
                <Emoji key={j} name={name} />
              ))}
            </EmojiRow>
          ))}
        </Column>
        <Column>
          <BlockTitle>Favorite Emojis</BlockTitle>
          <Favorites>
            {favorites.map((f) => (
              <React.Fragment key={f.count}>
                {f.count}{" "}
                {f.names.split(" ").map((name) => (
                  <React.Fragment key={name}>
                    <Emoji name={name} />{" "}
                  </React.Fragment>
                ))}
                |{" "}
              </React.Fragment>
            ))}
          </Favorites>
        </Column>
      </Columns>

      <People>
        {people.map((p) => (
          <Person key={p.name}>
            <BlockTitle $inset>{p.name}</BlockTitle>
            <Columns>
              {p.charts.map((c) => (
                <Column key={c.title}>
                  <BarChart {...c} />
                </Column>
              ))}
            </Columns>
          </Person>
        ))}
      </People>

      <Audio>
        <Plot viewBox="0 0 2880 271" role="img" aria-label="Waveform">
          <path d={wavePath} fill="none" stroke="#444" strokeWidth="3" strokeLinejoin="round" />
        </Plot>
        <TickStrip>
          {Array.from({ length: 38 }, (_, i) => (
            <Tick key={i}>{i * 2}</Tick>
          ))}
        </TickStrip>
        <Plot viewBox="0 -241 2880 412" role="img" aria-label="Frequency levels">
          <path d={stepPath} fill="none" stroke="#444" strokeWidth="3" />
        </Plot>
        <Spectrogram />
        <StopButton type="button">Stop</StopButton>
      </Audio>

      <Transcript>
        {transcript.map((t, i) => (
          <Line key={i}>{renderLine(t)}</Line>
        ))}
        <Line>
          <Indent />
          <Emoji name="a" size={31} drop={2} gap={3} />
        </Line>
      </Transcript>
    </Page>
  );
}
